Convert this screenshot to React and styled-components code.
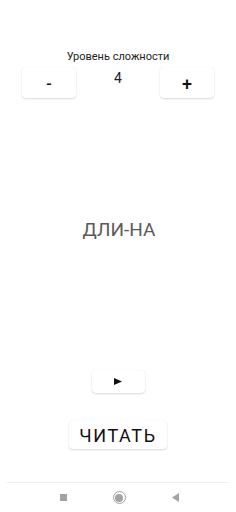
import React from 'react';
import styled, { createGlobalStyle } from 'styled-components';

const Global = createGlobalStyle`
  html, body {
    margin: 0;
    padding: 0;
    background: #fff;
  }
  body {
    font-family: Roboto, "Noto Sans", sans-serif;
    -webkit-font-smoothing: antialiased;
  }
`;

export default function App() {
  return (
    <Screen>
      <Global />
      <Header>
        <Label>Уровень сложности</Label>
        <LevelRow>
          <CardButton w={54} h={31}><Sign>-</Sign></CardButton>
          <Level>4</Level>
          <CardButton w={54} h={31}><Sign big>+</Sign></CardButton>
        </LevelRow>
      </Header>
      <Stage>
        <Word>ДЛИ-НА</Word>
      </Stage>
      <CardButton w={53} h={23}>
        <svg width="8" height="7" viewBox="0 0 8 7">
          <polygon points="0,0 8,3.5 0,7" fill="#111" />
        </svg>
      </CardButton>
      <ReadButton>ЧИТАТЬ</ReadButton>
      <NavBar>
        <NavSquare />
        <NavHome><span /></NavHome>
        <svg width="7" height="9" viewBox="0 0 7 9">
          <polygon points="7,0 7,9 0,4.5" fill="#a3a3a3" />
        </svg>
      </NavBar>
    </Screen>
  );
}

const Screen = styled.div`
  height: 512px;
  width: 236px;
  display: flex;
  flex-direction: column;
  align-items: center;
  overflow: hidden;
`;

const Header = styled.div`
  width: 100%;
  display: flex;
  flex-direction: column;
  align-items: center;
  padding-top: 50px;
`;

const Label = styled.div`
  font-size: 11px;
  line-height: 13px;
  color: #222;
`;

const LevelRow = styled.div`
  width: 100%;
  box-sizing: border-box;
  padding: 0 22px;
  margin-top: 4px;
  display: flex;
  justify-content: space-between;
  align-items: flex-start;
`;

const Level = styled.div`
  font-size: 14px;
  line-height: 16px;
  margin-top: 3px;
  color: #222;
`;

const CardButton = styled.div`
  width: ${p => p.w}px;
  height: ${p => p.h}px;
  flex: none;
  background: #fff;
  border-radius: 4px;
  box-shadow: 0 1px 2px rgba(0, 0, 0, 0.14), 0 0 1px rgba(0, 0, 0, 0.1);
  display: flex;
  align-items: center;
  justify-content: center;
`;

const Sign = styled.span`
  font-size: ${p => (p.big ? 18 : 16)}px;
  font-weight: 500;
  color: #111;
  line-height: 1;
  margin-top: ${p => (p.big ? 2 : 3)}px;
`;

const Stage = styled.div`
  flex: 1;
  display: flex;
  align-items: center;
  justify-content: center;
  padding-bottom: 9px;
`;

const Word = styled.div`
  font-size: 19px;
  line-height: 24px;
  color: #5a5a5a;
  padding-left: 2px;
`;

const ReadButton = styled.div`
  margin: 28px 0 33px;
  width: 98px;
  height: 28px;
  background: #fff;
  border-radius: 4px;
  box-shadow: 0 1px 2px rgba(0, 0, 0, 0.14), 0 0 1px rgba(0, 0, 0, 0.1);
  display: flex;
  align-items: center;
  justify-content: center;
  font-size: 18px;
  letter-spacing: 1.6px;
  color: #111;
`;

const NavBar = styled.div`
  width: 220px;
  height: 29px;
  flex: none;
  border-top: 1px solid #eee;
  display: flex;
  align-items: center;
  justify-content: center;
  gap: 46px;
  padding-left: 2px;
`;

const NavSquare = styled.div`
  width: 7px;
  height: 7px;
  background: #a3a3a3;
`;

const NavHome = styled.div`
  width: 11px;
  height: 11px;
  border-radius: 50%;
  border: 1px solid #a3a3a3;
  display: flex;
  align-items: center;
  justify-content: center;
  & > span {
    width: 8px;
    height: 8px;
    border-radius: 50%;
    background: #a3a3a3;
  }
`;
